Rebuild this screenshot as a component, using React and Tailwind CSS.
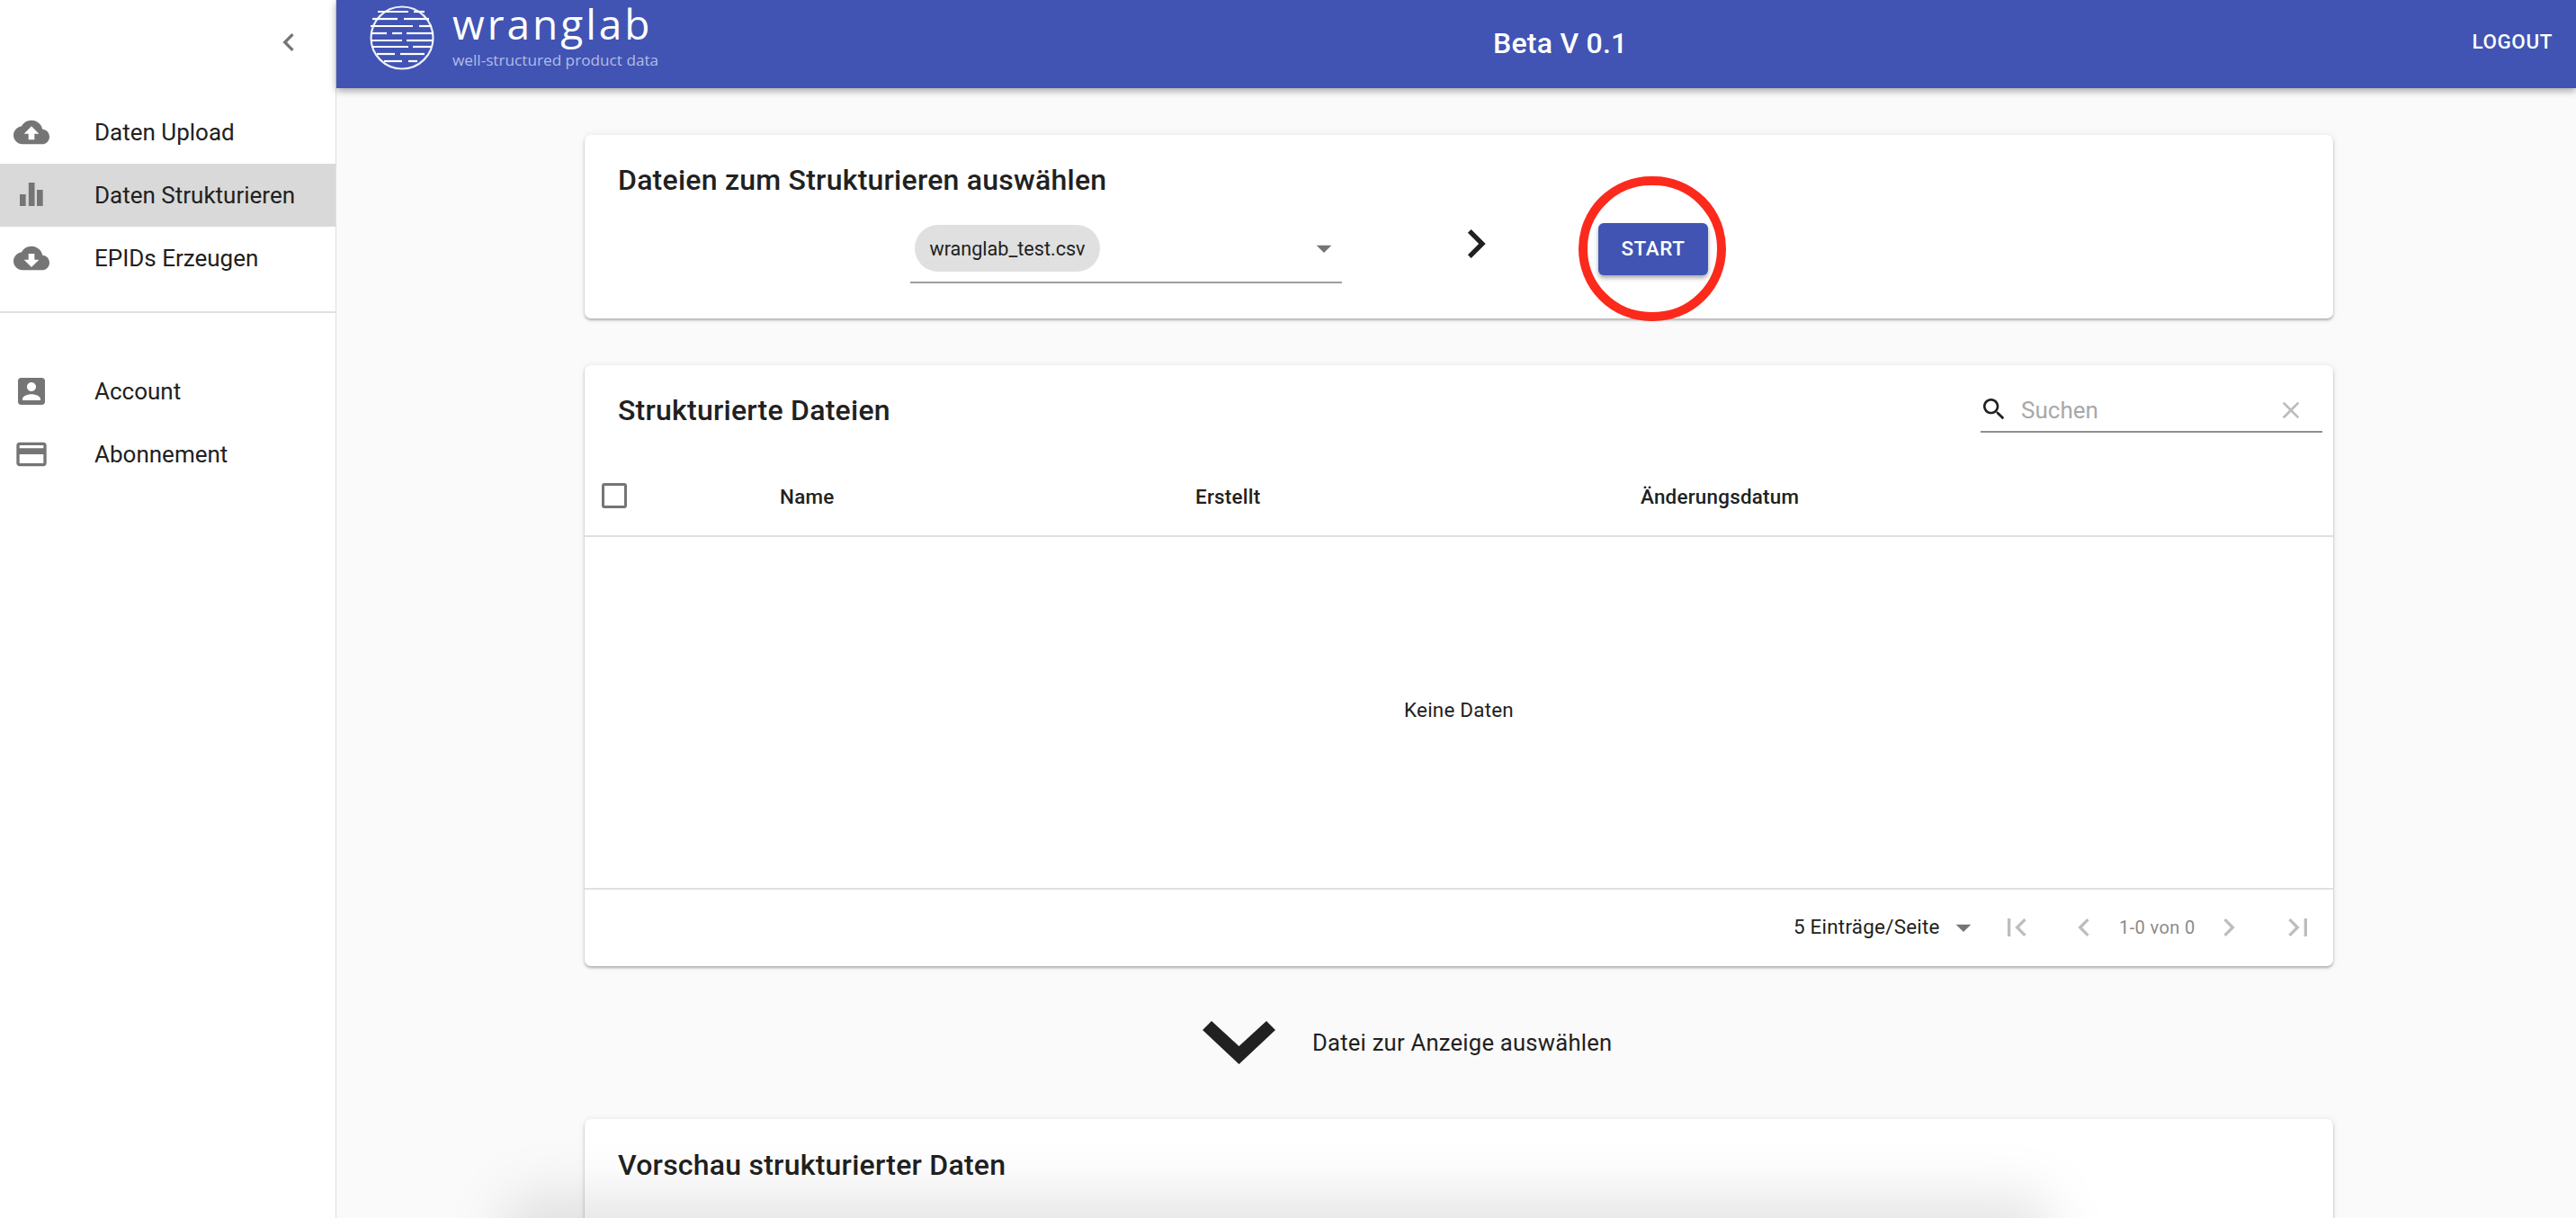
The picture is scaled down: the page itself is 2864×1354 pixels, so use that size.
const font = { fontFamily: "Roboto, sans-serif" };
const logoFont = { fontFamily: "'Open Sans', sans-serif" };

function Icon({ d, className }) {
  return (
    <svg viewBox="0 0 24 24" className={className} fill="currentColor">
      <path d={d} />
    </svg>
  );
}

const icons = {
  upload: "M19.35 10.04C18.67 6.59 15.64 4 12 4 9.11 4 6.6 5.64 5.35 8.04 2.34 8.36 0 10.91 0 14c0 3.31 2.69 6 6 6h13c2.76 0 5-2.24 5-5 0-2.64-2.05-4.78-4.65-4.96zM14 13v4h-4v-4H7l5-5 5 5h-3z",
  chart: "M4.2 11.4h4v7.8h-4zM10.1 3.6h4v15.6h-4zM15.6 8.4h4v10.8h-4z",
  download: "M19.35 10.04C18.67 6.59 15.64 4 12 4 9.11 4 6.6 5.64 5.35 8.04 2.34 8.36 0 10.91 0 14c0 3.31 2.69 6 6 6h13c2.76 0 5-2.24 5-5 0-2.64-2.05-4.78-4.65-4.96zM17 13l-5 5-5-5h3V9h4v4h3z",
  account: "M3 5v14c0 1.1.89 2 2 2h14c1.1 0 2-.9 2-2V5c0-1.1-.9-2-2-2H5c-1.11 0-2 .9-2 2zm12 4c0 1.66-1.34 3-3 3s-3-1.34-3-3 1.34-3 3-3 3 1.34 3 3zm-9 8c0-2 4-3.1 6-3.1s6 1.1 6 3.1v1H6v-1z",
  card: "M20 4H4c-1.11 0-1.99.89-1.99 2L2 18c0 1.11.89 2 2 2h16c1.11 0 2-.89 2-2V6c0-1.11-.89-2-2-2zm0 14H4v-6h16v6zm0-10H4V6h16v2z",
  search: "M15.5 14h-.79l-.28-.27C15.41 12.59 16 11.11 16 9.5 16 5.91 13.09 3 9.5 3S3 5.91 3 9.5 5.91 16 9.5 16c1.61 0 3.09-.59 4.23-1.57l.27.28v.79l5 4.99L20.49 19l-4.99-5zm-6 0C7.01 14 5 11.99 5 9.5S7.01 5 9.5 5 14 7.01 14 9.5 11.99 14 9.5 14z",
  close: "M19 6.41L17.59 5 12 10.59 6.41 5 5 6.41 10.59 12 5 17.59 6.41 19 12 13.41 17.59 19 19 17.59 13.41 12z",
  first: "M18.41 16.59L13.82 12l4.59-4.59L17 6l-6 6 6 6zM6 6h2v12H6z",
  prev: "M15.41 7.41L14 6l-6 6 6 6 1.41-1.41L10.83 12z",
  next: "M10 6L8.59 7.41 13.17 12l-4.58 4.59L10 18l6-6z",
  last: "M5.59 7.41L10.18 12l-4.59 4.59L7 18l6-6-6-6zM16 6h2v12h-2z",
  arrowDown: "M7 10l5 5 5-5z",
};

const navTop = [
  { label: "Daten Upload", icon: icons.upload },
  { label: "Daten Strukturieren", icon: icons.chart, active: true },
  { label: "EPIDs Erzeugen", icon: icons.download },
];

const navBottom = [
  { label: "Account", icon: icons.account },
  { label: "Abonnement", icon: icons.card },
];

function NavRow({ item }) {
  return (
    <div className={`h-[70px] flex items-center ${item.active ? "bg-[#d9d9d9]" : ""}`}>
      <div className="w-[70px] pl-[15px] shrink-0 text-[#757575]">
        <Icon d={item.icon} className="w-[40px] h-[40px]" />
      </div>
      <span className="ml-[35px] text-[26px] text-[#212121]">{item.label}</span>
    </div>
  );
}

function Logo() {
  // lines of the globe mark: [y, [x1, x2], ...]
  const rows = [
    [7, [9, 43], [49, 61]],
    [15, [3, 31], [38, 66]],
    [23, [1, 48], [55, 69]],
    [31, [1, 19], [25, 36], [41, 71]],
    [39, [1, 36], [41, 71]],
    [46, [2, 43], [48, 68]],
    [54, [8, 28], [34, 61]],
    [62, [16, 36], [43, 53]],
  ];
  return (
    <svg viewBox="0 0 72 72" className="w-[72px] h-[72px]" fill="none" stroke="white" strokeWidth="2.2">
      <circle cx="36" cy="36" r="34.5" opacity="0.9" />
      {rows.map(([y, ...segs]) =>
        segs.map(([a, b]) => <line key={`${y}-${a}`} x1={a} x2={b} y1={y} y2={y} />)
      )}
    </svg>
  );
}

function Card({ className, children }) {
  return (
    <div className={`w-[1944px] bg-white rounded-[7px] shadow-[0_2px_3px_rgba(0,0,0,0.28),0_0_8px_rgba(0,0,0,0.07)] ${className}`}>
      {children}
    </div>
  );
}

function Title({ children }) {
  return <h2 className="text-[32px] leading-[44px] font-medium tracking-[0.24px] text-[#212121]">{children}</h2>;
}

export default function App() {
  return (
    <div className="h-screen flex overflow-hidden bg-[#fafafa]" style={font}>
      {/* Sidebar */}
      <aside className="w-[374px] shrink-0 bg-white border-r border-[#e0e0e0] flex flex-col">
        <div className="h-[112px] flex justify-end pr-[32px] pt-[27px] text-[#757575]">
          <Icon d={icons.prev} className="w-[40px] h-[40px]" />
        </div>
        {navTop.map((item) => (
          <NavRow key={item.label} item={item} />
        ))}
        <div className="mt-[24px] mb-[52px] h-[2px] bg-[#e0e0e0]" />
        {navBottom.map((item) => (
          <NavRow key={item.label} item={item} />
        ))}
      </aside>

      <div className="flex-1 flex flex-col min-w-0 relative">
        {/* App bar */}
        <header className="h-[98px] shrink-0 bg-[#4154b3] text-white flex items-center relative z-10 shadow-[0_3px_8px_rgba(0,0,0,0.35)]">
          <div className="w-[129px] pl-[37px] pb-[14px] shrink-0">
            <Logo />
          </div>
          <div className="w-[1157px] h-[98px] shrink-0 flex flex-col">
            <div className="text-[46px] h-[53px] pt-[1px] leading-[50px] tracking-[3px]" style={logoFont}>
              wranglab
            </div>
            <div className="text-[17.2px] mt-[1px] leading-[26px] text-[#b3bce6]" style={logoFont}>
              well-structured product data
            </div>
          </div>
          <div className="text-[32px] tracking-[0.24px] font-medium pb-[3px]">Beta V 0.1</div>
          <div className="ml-auto pr-[26px] pb-[5px] text-[22.4px] font-medium tracking-[0.64px]">LOGOUT</div>
        </header>

        {/* Content */}
        <main className="flex-1 pl-[276px] pt-[52px] relative">
          <Card className="h-[204px] pl-[37px] pt-[28px]">
            <Title>Dateien zum Strukturieren auswählen</Title>
            <div className="flex items-start mt-[24px] relative">
              <div className="ml-[325px] w-[480px] h-[69px] border-b-2 border-[#9e9e9e] flex items-start pl-[5px] pt-[4px] relative">
                <span className="h-[52px] w-[206px] pt-[2px] rounded-full bg-[#e0e0e0] flex items-center justify-center text-[21.6px] text-[#212121]">
                  wranglab_test.csv
                </span>
                <Icon d={icons.arrowDown} className="absolute right-[0px] top-[10px] w-[40px] h-[40px] text-[#757575]" />
              </div>
              <Icon d={icons.next} className="ml-[117px] mt-[-7px] w-[64px] h-[64px] shrink-0 text-[#212121]" />
              <button className="ml-[104px] mt-[2px] w-[122px] h-[58px] rounded-[6px] bg-[#4154b3] text-white text-[22.4px] font-medium tracking-[0.64px] shadow-[0_3px_5px_rgba(0,0,0,0.35)]">
                START
              </button>
              {/* red annotation round the button */}
              <div className="absolute left-[1068px] top-[-50px] w-[164px] h-[161px] rounded-full border-[10px] border-[#fb2a1c]" />
            </div>
          </Card>

          <Card className="h-[668px] mt-[52px] flex flex-col">
            <div className="h-[92px] flex items-start pl-[37px] pt-[28px] pr-[12px]">
              <Title>Strukturierte Dateien</Title>
              <div className="ml-auto mt-[-1px] w-[380px] h-[48px] border-b-2 border-[#8f8f8f] flex items-center pb-[2px] text-[#212121]">
                <Icon d={icons.search} className="w-[32px] h-[32px] shrink-0 ml-[-1px]" />
                <span className="ml-[14px] mt-[2px] text-[26px] text-[#a8a8a8]">Suchen</span>
                <Icon d={icons.close} className="ml-auto mr-[19px] mt-[2px] w-[32px] h-[32px] text-[#bdbdbd]" />
              </div>
            </div>
            <div className="h-[99px] border-b-2 border-[#e0e0e0] flex items-center text-[22.4px] tracking-[0.24px] font-medium text-[#212121] pt-[12px]">
              <span className="ml-[19px] w-[28px] h-[28px] rounded-[3px] border-[3px] border-[#757575] -mt-[3px]" />
              <span className="ml-[170px] w-[462px]">Name</span>
              <span className="w-[495px]">Erstellt</span>
              <span>Änderungsdatum</span>
            </div>
            <div className="h-[390px] flex items-center justify-center text-[22.4px] tracking-[0.24px] text-[#212121] pb-[4px]">
              Keine Daten
            </div>
            <div className="flex-1 border-t-2 border-[#e0e0e0] flex items-center text-[22.4px] tracking-[0.24px] text-[#212121] pb-[2px]">
              <span className="ml-[1344px] w-[161px] whitespace-nowrap">5 Einträge/Seite</span>
              <Icon d={icons.arrowDown} className="ml-[8px] w-[40px] h-[40px] shrink-0 text-[#757575]" />
              <Icon d={icons.first} className="ml-[19px] w-[40px] h-[40px] shrink-0 text-[#bdbdbd]" />
              <Icon d={icons.prev} className="ml-[35px] w-[40px] h-[40px] shrink-0 text-[#bdbdbd]" />
              <span className="ml-[19px] w-[83px] whitespace-nowrap text-[20px] text-[#8a8a8a] tracking-[0.4px]">1-0 von 0</span>
              <Icon d={icons.next} className="ml-[19px] w-[40px] h-[40px] shrink-0 text-[#bdbdbd]" />
              <Icon d={icons.last} className="ml-[37px] w-[40px] h-[40px] shrink-0 text-[#bdbdbd]" />
            </div>
          </Card>

          <div className="h-[170px] w-[1944px] flex items-center pl-[687px] text-[25.6px] tracking-[0.24px] text-[#212121]">
            <svg viewBox="0 0 81 48" className="w-[81px] h-[48px] shrink-0" fill="#212121">
              <path d="M0 10 L10 0 L40.5 28 L71 0 L81 10 L40.5 48 Z" />
            </svg>
            <span className="ml-[41px]">Datei zur Anzeige auswählen</span>
          </div>

          <Card className="h-[300px] pl-[37px] pt-[29px]">
            <Title>Vorschau strukturierter Daten</Title>
          </Card>

          <div className="absolute left-[186px] top-[1230px] w-[1720px] h-[100px] rounded-[30px] bg-black/10 blur-[30px]" />
        </main>
      </div>
    </div>
  );
}
